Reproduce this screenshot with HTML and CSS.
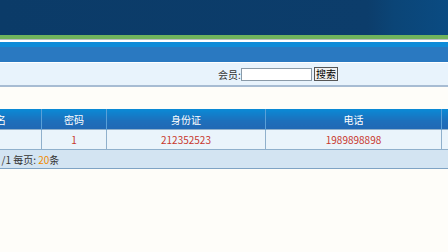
FILE: index.html
```html
<!DOCTYPE html>
<html lang="zh">
<head>
<meta charset="utf-8">
<title>会员管理</title>
<link rel="stylesheet" href="styles.css">
</head>
<body>
<div class="top">
  <div class="banner"></div>
  <div class="green"></div>
  <div class="grey"></div>
  <div class="navbar"></div>
</div>
<div class="toolbar">
  <span class="label">会员:</span>
  <input class="search" type="text">
  <button class="btn">搜索</button>
</div>
<div class="tablewrap">
  <table class="grid">
    <colgroup>
      <col class="c1"><col class="c2"><col class="c3"><col class="c4"><col class="c5">
    </colgroup>
    <thead>
      <tr><th>用户名</th><th>密码</th><th>身份证</th><th>电话</th><th></th></tr>
    </thead>
    <tbody>
      <tr><td></td><td class="red">1</td><td class="red">212352523</td><td class="red">1989898898</td><td></td></tr>
    </tbody>
    <tfoot>
      <tr><td colspan="5"><span class="pager">/1 每页: <b class="num">20</b>条</span></td></tr>
    </tfoot>
  </table>
</div>
</body>
</html>
```
FILE: styles.css
```css
html, body {
  margin: 0;
  padding: 0;
  background: #fefdf9;
  font-family: "Noto Sans CJK SC", "DejaVu Sans", sans-serif;
  font-size: 11px;
  color: #333;
  overflow: hidden;
}
.top {
  display: flex;
  flex-direction: column;
}
.banner {
  height: 35px;
  background: linear-gradient(90deg, #0b3b68 0%, #0c3d6b 82%, #0b4577 88%, #0a4b82 100%);
}
.green {
  height: 4px;
  background: #6fb35c;
}
.grey {
  height: 3px;
  background: linear-gradient(#b7bcc0 0 1px, #ffffff 1px);
}
.navbar {
  height: 20px;
  background: linear-gradient(#0e8bd8 0 5px, #2a79c1 5px);
  border-bottom: 1px solid #ffffff;
}
.toolbar {
  height: 22px;
  background: #e8f3fc;
  border-bottom: 2px solid #a7bcd3;
  display: flex;
  align-items: center;
  padding-left: 218px;
  gap: 1px;
  font-size: 10px;
  color: #333;
}
.label {
  white-space: nowrap;
  width: 22px;
}
.search {
  width: 69px;
  height: 11px;
  padding: 0;
  border: 1px solid #8a9aa8;
  background: #fff;
}
.btn {
  margin-left: 1px;
  width: 24px;
  height: 14px;
  padding: 0;
  font-size: 10px;
  font-family: "Noto Sans CJK SC", sans-serif;
  border: 1px solid #555;
  background: #f0f0f0;
  line-height: 12px;
}
.tablewrap {
  margin-top: 22px;
  margin-left: -60px;
}
.grid {
  border-collapse: collapse;
  table-layout: fixed;
  width: 600px;
}
.c1 { width: 101px; }
.c2 { width: 65px; }
.c3 { width: 159px; }
.c4 { width: 176px; }
.c5 { width: 99px; }
.grid th {
  height: 20px;
  padding: 0;
  color: #fff;
  font-weight: normal;
  font-size: 10px;
  background: linear-gradient(#0a8ad6, #1d6fbb 60%, #2168b4);
  border-left: 1px solid #5aa0d8;
  text-align: center;
}
.grid tbody td {
  height: 19px;
  padding: 0;
  background: #eaf4fb;
  border: 1px solid #8fb0cc;
  text-align: center;
  font-size: 10px;
}
.red {
  color: #c8372d;
}
.grid tfoot td {
  height: 18px;
  padding: 0 0 0 61px;
  background: #d3e4f2;
  border-bottom: 1px solid #7fa3c4;
  font-size: 10px;
  color: #333;
}
.num {
  color: #f08c00;
  font-weight: normal;
}
```
